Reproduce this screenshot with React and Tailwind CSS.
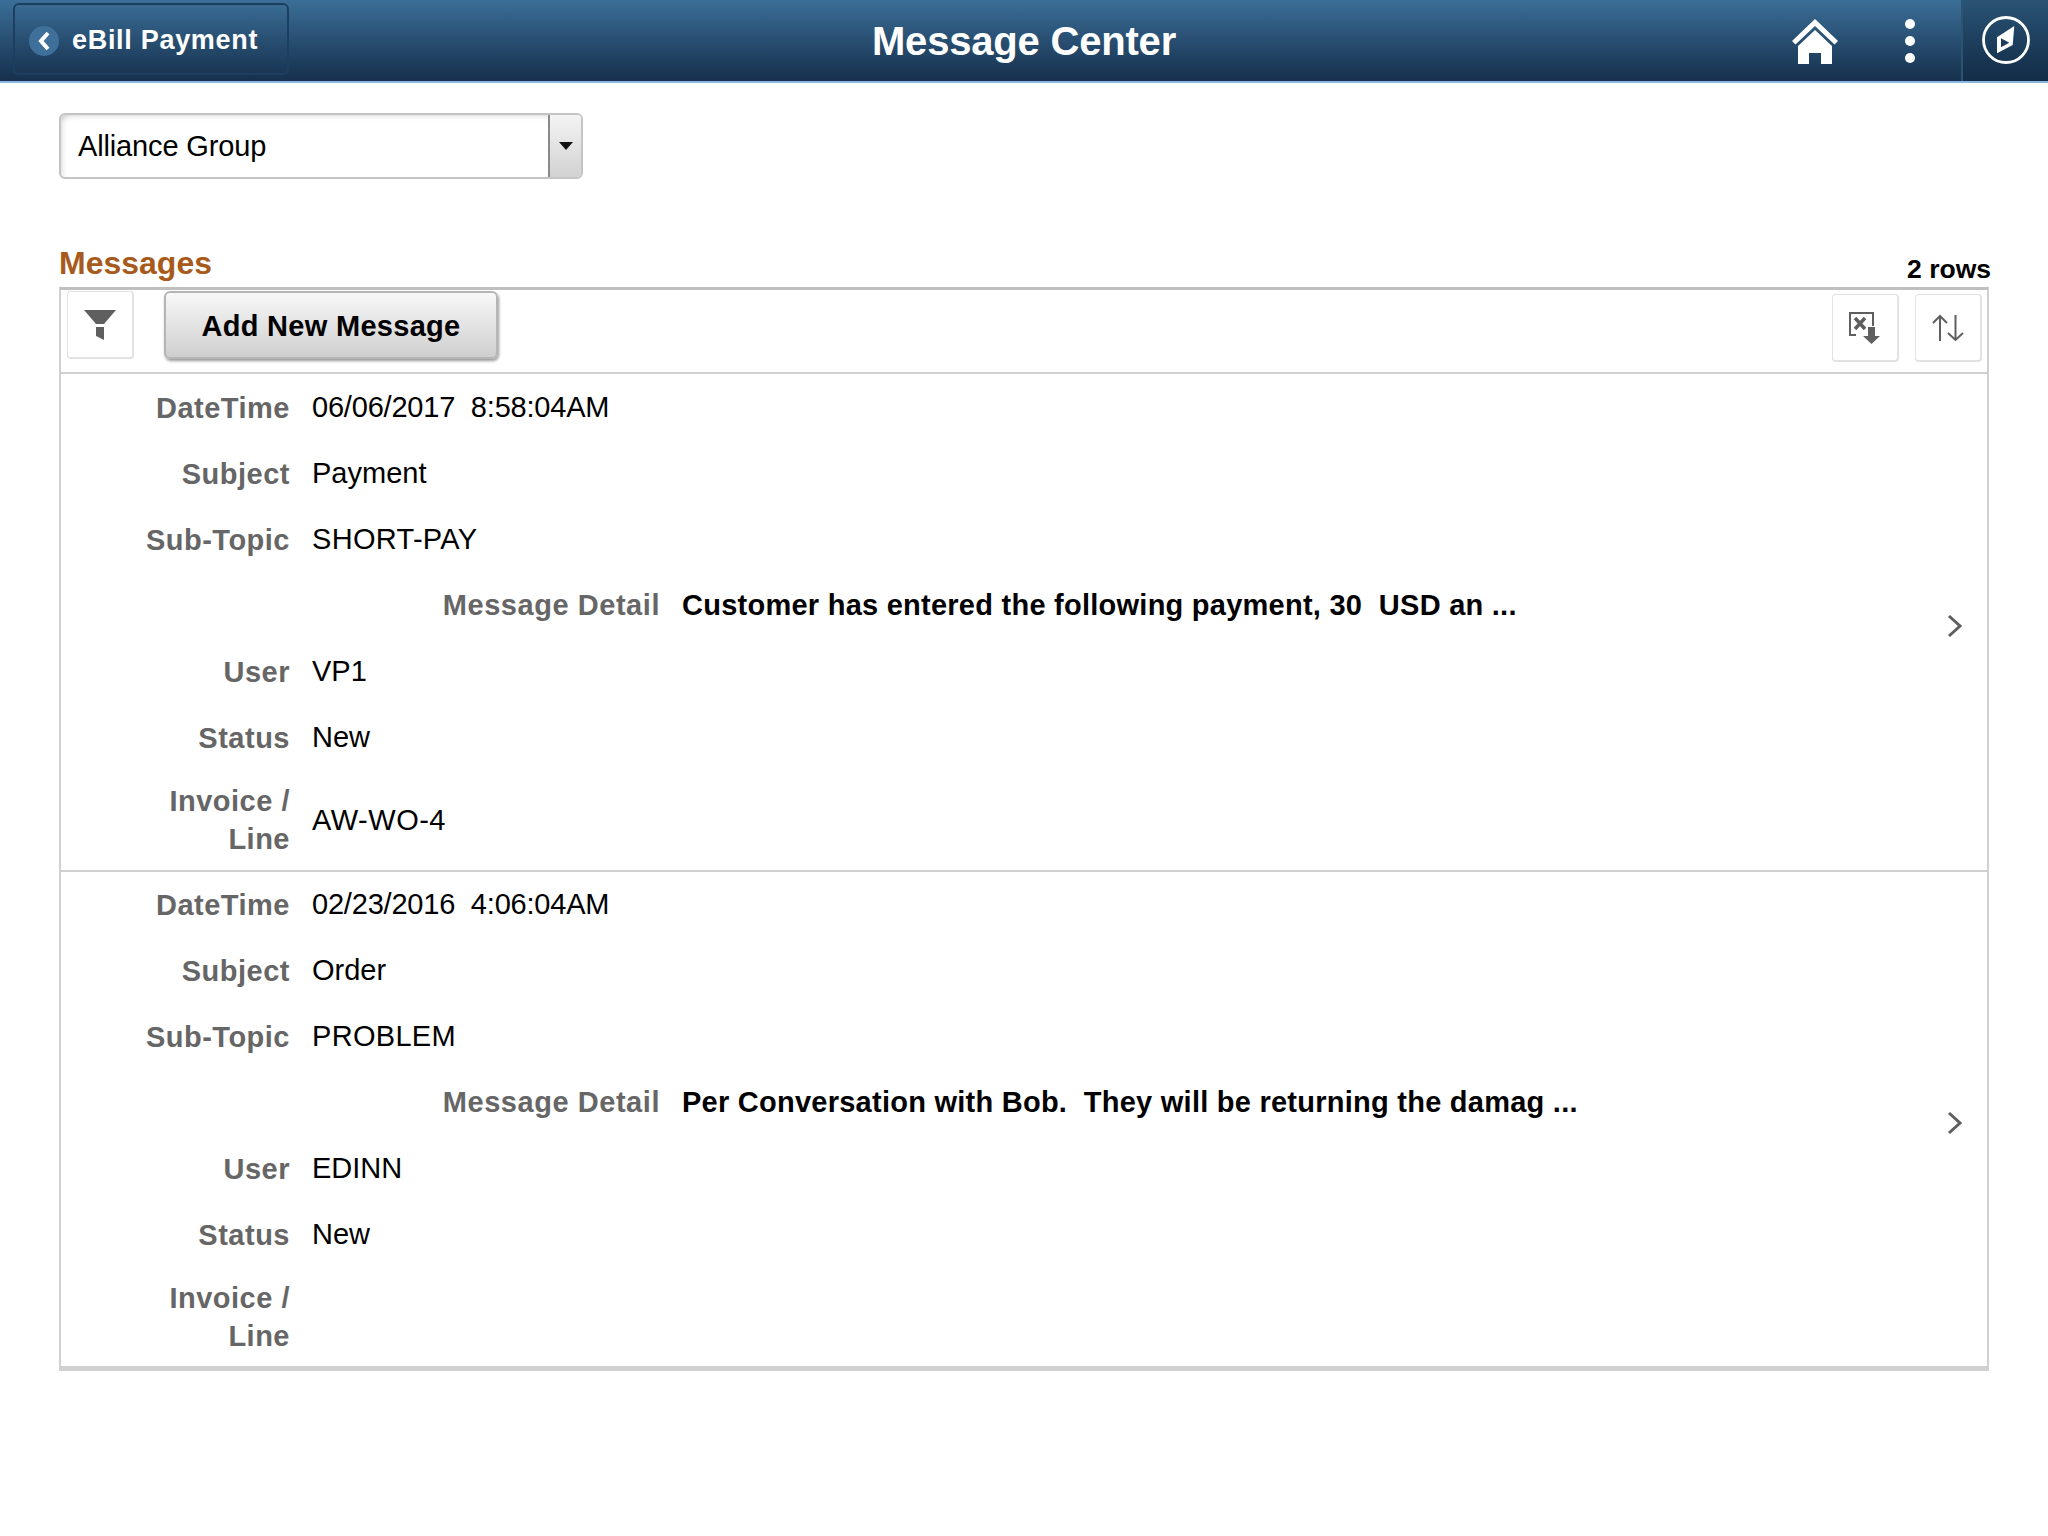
const rows = [
  {
    date: '06/06/2017\u00a0\u00a08:58:04AM',
    subject: 'Payment',
    topic: 'SHORT-PAY',
    detail: 'Customer has entered the following payment, 30\u00a0\u00a0USD an ...',
    user: 'VP1',
    status: 'New',
    invoice: 'AW-WO-4',
  },
  {
    date: '02/23/2016\u00a0\u00a04:06:04AM',
    subject: 'Order',
    topic: 'PROBLEM',
    detail: 'Per Conversation with Bob.\u00a0\u00a0They will be returning the damag ...',
    user: 'EDINN',
    status: 'New',
    invoice: '',
  },
];

function Field({ label, children, valueClass = '' }) {
  return (
    <div className="flex h-[66px] items-center">
      <div className="w-[229px] shrink-0 text-right text-[29px] leading-[38px] font-bold tracking-[0.5px] text-[#666666]">{label}</div>
      <div className={`ml-[22px] text-[29px] text-black ${valueClass}`}>{children}</div>
    </div>
  );
}

function MessageRow({ row, last }) {
  return (
    <div className={`flex items-center pt-[2px] ${last ? 'h-[497px] border-b-[3px] border-[#d0d0d0]' : 'h-[498px] border-b-2 border-[#d0d0d0]'}`}>
      <div className="flex-1">
        <Field label="DateTime" valueClass="tracking-[-0.2px]">{row.date}</Field>
        <Field label="Subject">{row.subject}</Field>
        <Field label="Sub-Topic" valueClass="tracking-[0.3px]">{row.topic}</Field>
        <div className="flex h-[66px] items-center">
          <div className="w-[599px] shrink-0 text-right text-[29px] font-bold tracking-[0.55px] text-[#666666]">Message Detail</div>
          <div className="ml-[22px] text-[29px] font-bold tracking-[0.25px] text-black">{row.detail}</div>
        </div>
        <Field label="User">{row.user}</Field>
        <Field label="Status">{row.status}</Field>
        <div className="flex h-[100px] items-center">
          <div className="-mt-[2px] w-[229px] shrink-0 text-right text-[29px] leading-[38px] font-bold tracking-[0.5px] text-[#666666]">
            Invoice /<br />Line
          </div>
          <div className="ml-[22px] text-[29px] tracking-[0.5px] text-black">{row.invoice}</div>
        </div>
      </div>
      <svg width="16" height="24" viewBox="0 0 16 24" className="mt-[6px] mr-[24px] shrink-0" fill="none" stroke="#5f5f5f" strokeWidth="3">
        <path d="M2 2 L13 12 L2 22" />
      </svg>
    </div>
  );
}

function IconButton({ children }) {
  return (
    <button type="button" className="flex h-[68px] w-[67px] items-center justify-center rounded-[4px] border border-r-2 border-b-2 border-[#e2e2e2] bg-white">
      {children}
    </button>
  );
}

export default function App() {
  return (
    <div className="min-h-[1536px] bg-white font-['Liberation_Sans',Arial,sans-serif]">
      <header className="grid h-[83px] grid-cols-[1fr_auto_1fr] items-stretch border-b-2 border-[#8cb6e0] bg-gradient-to-b from-[#3b6f98] to-[#16304d]">
        <div className="flex items-center pl-[13px]">
          <button type="button" className="mb-[4px] flex h-[72px] w-[276px] items-center rounded-[6px] border-2 border-[#1d3f5f] pt-[4px] pl-[14px]">
            <span className="flex h-[30px] w-[30px] items-center justify-center rounded-full bg-[#3f7099]">
              <svg width="14" height="20" viewBox="0 0 14 20" fill="none" stroke="white" strokeWidth="4">
                <path d="M11 2 L4 10 L11 18" />
              </svg>
            </span>
            <span className="ml-[13px] text-[27px] font-bold tracking-[0.7px] whitespace-nowrap text-white">eBill Payment</span>
          </button>
        </div>
        <div className="flex items-center text-[40px] font-bold tracking-[-0.2px] text-white">Message Center</div>
        <div className="flex items-stretch justify-end">
          <div className="flex items-center pr-[46px]">
            <svg width="48" height="48" viewBox="0 0 48 48" fill="white">
              <path d="M24 2 L47 24 L43.500 27.500 L24 9 L4.500 27.500 L1 24 Z" />
              <path d="M24 13 L41 29 V47 H30 V36 H18 V47 H7 V29 Z" />
            </svg>
            <div className="ml-[66px] flex flex-col gap-[7px]">
              <span className="h-[10px] w-[10px] rounded-full bg-white" />
              <span className="h-[10px] w-[10px] rounded-full bg-white" />
              <span className="h-[10px] w-[10px] rounded-full bg-white" />
            </div>
          </div>
          <div className="flex w-[87px] items-center justify-center border-l-2 border-[#2d5373] bg-gradient-to-b from-[#2a5475] to-[#122c47] pb-[2px]">
            <svg width="48" height="48" viewBox="0 0 48 48">
              <circle cx="24" cy="24" r="22.500" fill="none" stroke="white" strokeWidth="2.800" />
              <path d="M32.300 10 L30.700 29 L15 37.300 L15 21.300 Z" fill="white" />
              <path d="M19 22.300 L27.300 26.700 L19 31.300 Z" fill="#1c3c5a" />
            </svg>
          </div>
        </div>
      </header>

      <main className="px-[59px]">
        <div className="mt-[30px] flex h-[66px] w-[524px] items-stretch overflow-hidden rounded-[6px] border-2 border-[#c4c4c4] bg-white shadow-[inset_6px_6px_6px_-6px_#cccccc]">
          <div className="flex flex-1 items-center pt-[2px] pl-[17px] text-[29px] tracking-[-0.15px] text-black">Alliance Group</div>
          <div className="flex w-[33px] items-center justify-center border-l-2 border-[#8a8a8a] bg-gradient-to-b from-[#f4f4f4] to-[#d2d2d2]">
            <svg width="14" height="8" viewBox="0 0 14 8" fill="#111111">
              <path d="M0 0 H14 L7 8 Z" />
            </svg>
          </div>
        </div>

        <div className="mt-[64px] flex h-[44px] w-[1932px] items-end justify-between">
          <div className="text-[32px] font-bold text-[#a85a1c]">Messages</div>
          <div className="-mb-[3px] text-[26.500px] font-bold text-black">2 rows</div>
        </div>

        <div className="w-[1930px] border-2 border-t-[3px] border-[#d0d0d0] border-t-[#bfbfbf]">
          <div className="flex h-[84px] items-center border-b-2 border-[#d0d0d0] pr-[5px] pb-[12px] pl-[6px]">
            <IconButton>
              <svg width="34" height="32" viewBox="0 0 34 32" fill="#5f5f5f">
                <path d="M1 1 H33 L21 15 H13 Z" />
                <path d="M13 18 H21 V31 L13 27 Z" />
              </svg>
            </IconButton>
            <button type="button" className="ml-[30px] h-[68px] w-[334px] rounded-[6px] border-2 border-[#b5b5b5] bg-gradient-to-b from-[#f8f8f8] to-[#cfcfcf] pt-[3px] text-[29px] font-bold tracking-[0.3px] text-black shadow-[1px_2px_3px_#999999]">
              Add New Message
            </button>
            <div className="mt-[6px] ml-auto flex gap-[16px]">
              <IconButton>
                <svg width="34" height="34" viewBox="0 0 34 34" fill="none">
                  <path d="M8 24 H2 V2 H25 V15" stroke="#5f5f5f" strokeWidth="2" />
                  <path d="M7 7 L17 18 M17 7 L7 18" stroke="#5f5f5f" strokeWidth="3.500" />
                  <path d="M20 16 H27 V25 H32 L23.500 33 L15 25 H20 Z" fill="#5f5f5f" />
                </svg>
              </IconButton>
              <IconButton>
                <svg width="32" height="28" viewBox="0 0 32 28" fill="none" stroke="#5f5f5f" strokeWidth="2">
                  <path d="M8 27 V2 M1 9 L8 2 L15 9" />
                  <path d="M23.500 1 V26 M16 19 L23.500 26 L31 19" />
                </svg>
              </IconButton>
            </div>
          </div>
          {rows.map((row, i) => (
            <MessageRow key={row.date} row={row} last={i === rows.length - 1} />
          ))}
        </div>
      </main>
    </div>
  );
}
